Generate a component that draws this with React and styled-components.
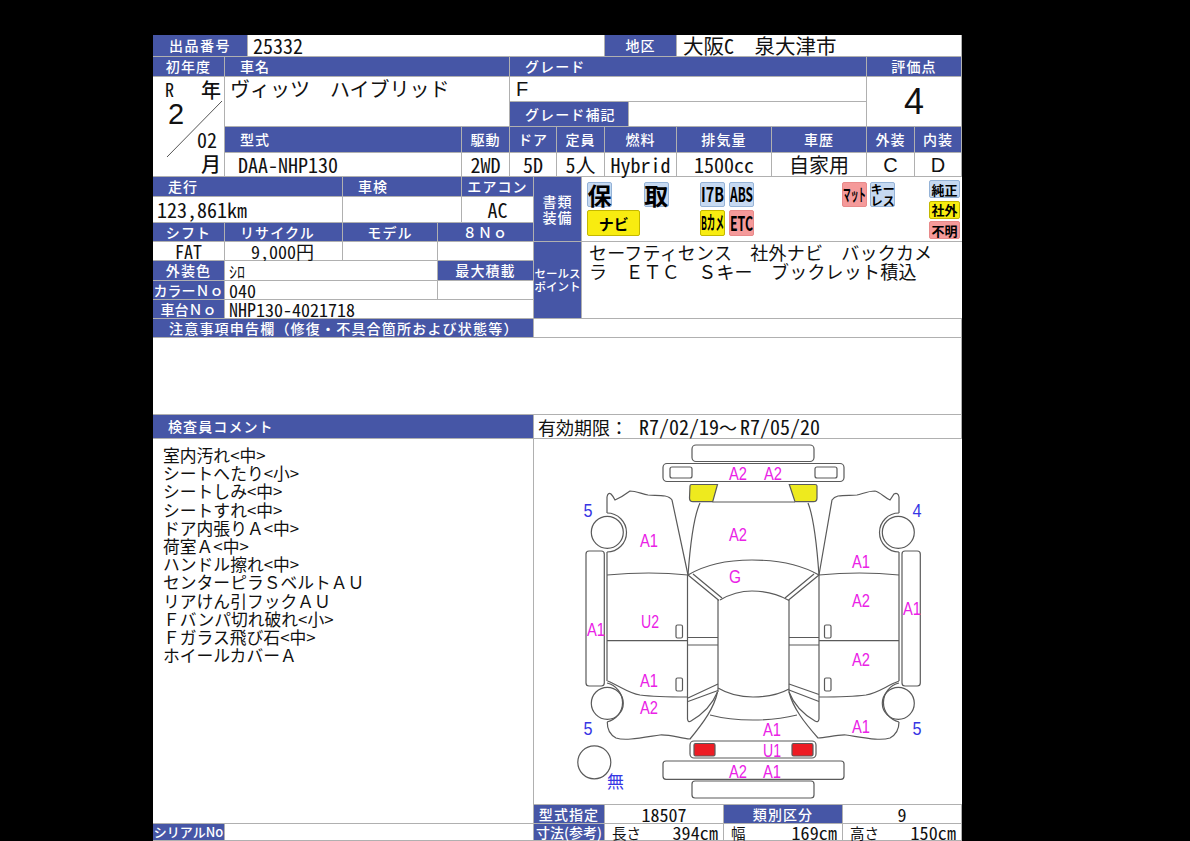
import React from "react";
import styled, { createGlobalStyle } from "styled-components";

const Global = createGlobalStyle`
  html, body { margin: 0; padding: 0; background: #000; height: 841px; overflow: hidden; }
  #root { height: 841px; }
`;

const BLUE = "#4656a6";
const LINE = "#b0b0b0";
const CJK = `"Noto Sans CJK JP", sans-serif`;
const SANS = `"Liberation Sans", sans-serif`;

const Sheet = styled.div`
  margin: 35px 0 0 153px;
  width: 809px;
  height: 806px;
  overflow: hidden;
  background: #fff;
  display: grid;
  font-family: ${CJK};
  grid-template-columns:
    [a] 72px [b] 23px [c] 95px [d] 95px [e] 24px [f] 48px [g] 24px [h] 23px [i] 25px
    [j] 23px [k] 24px [l] 48px [m] 47px [n] 48px [o] 71px [p] 24px [q] 48px [r] 47px [s];
  grid-template-rows:
    [r1] 22px [r2] 20px [r3] 25px [r4] 25px [r5] 26px [r6] 24px [r7] 20px [r8] 26px [r9] 19px
    [r10] 19px [r11] 20px [r12] 19px [r13] 19px [r14] 19px [r15] 77px [r16] 24px [r17] 366px
    [r18] 19px [r19] 17px [r20];
`;

const Head = styled.div`
  grid-column: ${(p) => p.$c};
  grid-row: ${(p) => p.$r};
  background: ${BLUE};
  color: #fff;
  font-size: ${(p) => p.$size || 14}px;
  font-weight: 500;
  letter-spacing: ${(p) => p.$space ?? 1.1}px;
  line-height: 1.15;
  display: flex;
  align-items: center;
  justify-content: ${(p) => (p.$left !== undefined ? "flex-start" : "center")};
  padding-left: ${(p) => p.$left || 0}px;
  text-align: center;
  white-space: nowrap;
  box-sizing: border-box;
  border-right: 1px solid ${LINE};
  border-bottom: 1px solid ${LINE};
`;

const Val = styled.div`
  grid-column: ${(p) => p.$c};
  grid-row: ${(p) => p.$r};
  background: #fff;
  color: #111;
  font-size: ${(p) => p.$size || 20}px;
  font-feature-settings: ${(p) => (p.$wide ? "normal" : '"hwid"')};
  display: flex;
  align-items: ${(p) => (p.$top ? "flex-start" : "center")};
  justify-content: ${(p) => (p.$left !== undefined ? "flex-start" : "center")};
  padding-left: ${(p) => p.$left || 0}px;
  padding-top: ${(p) => (p.$top ? 2 : 0)}px;
  line-height: 1;
  white-space: nowrap;
  box-sizing: border-box;
  border-right: 1px solid ${LINE};
  border-bottom: 1px solid ${LINE};
`;

const Latin = styled.span`
  font-family: ${SANS};
  font-size: ${(p) => p.$size || 20}px;
`;

const YearCell = styled.div`
  grid-column: a / b;
  grid-row: r3 / r7;
  position: relative;
  display: flex;
  flex-direction: column;
  box-sizing: border-box;
  padding: 0 3px 0 12px;
  border-right: 1px solid ${LINE};
  border-bottom: 1px solid ${LINE};
  color: #111;
  font-feature-settings: "hwid";
`;
const YearTop = styled.div`
  display: flex;
  justify-content: space-between;
  align-items: center;
  height: 24px;
  font-size: 18px;
`;
const YearKanji = styled.span`
  font-size: 20px;
  font-weight: 500;
`;
const YearBig = styled.div`
  font-family: ${SANS};
  font-size: 29px;
  line-height: 26px;
  height: 26px;
  padding-left: 3px;
`;
const YearEnd = styled.div`
  text-align: right;
  font-size: 20px;
  font-weight: ${(p) => (p.$kanji ? 500 : 400)};
  line-height: 25px;
  height: ${(p) => (p.$kanji ? 25 : 24)}px;
  padding-right: ${(p) => (p.$kanji ? 0 : 4)}px;
`;
const Slash = styled.svg`
  position: absolute;
  left: 0;
  top: 0;
`;

const EquipCell = styled.div`
  grid-column: j / s;
  grid-row: r7 / r10;
  display: flex;
  justify-content: space-between;
  padding: 5px 2px 0 5px;
  box-sizing: border-box;
  border-bottom: 1px solid ${LINE};
`;
const EquipGrid = styled.div`
  display: grid;
  grid-template-columns: repeat(11, 25px);
  grid-template-rows: 25px 26px;
  column-gap: 3.33px;
  row-gap: 3px;
`;
const TONES = {
  blue: ["#c6d9f1", "#95b3d7"],
  yellow: ["#f8ec10", "#c4b800"],
  pink: ["#f59a9a", "#e88a8a"],
};
const Chip = styled.div`
  grid-column: ${(p) => p.$c};
  grid-row: ${(p) => p.$r};
  background: ${(p) => TONES[p.$tone][0]};
  border: 1px solid ${(p) => TONES[p.$tone][1]};
  border-radius: 2px;
  box-sizing: border-box;
  color: #000;
  font-weight: 700;
  font-size: ${(p) => p.$size || 14}px;
  line-height: 1;
  display: flex;
  align-items: center;
  justify-content: center;
  text-align: center;
  white-space: nowrap;
`;
const ChipSvg = styled.svg`
  display: block;
  width: 23px;
  height: 23px;
`;
const Tight = ({ t, size = 20, w = 23 }) => (
  <ChipSvg viewBox="0 0 23 23">
    <text
      x="11.5"
      y={11.5 + size * 0.36}
      textAnchor="middle"
      fontSize={size}
      fontWeight="700"
      fontFamily='"Noto Sans CJK JP", sans-serif'
      fill="#000"
      textLength={w}
      lengthAdjust="spacingAndGlyphs"
    >
      {t}
    </text>
  </ChipSvg>
);
const SideCol = styled.div`
  display: flex;
  flex-direction: column;
  gap: 2.5px;
  width: 31px;
  margin-top: -2px;
`;
const SideChip = styled(Chip)`
  height: 18px;
  font-size: 13px;
`;

const SalesText = styled.div`
  grid-column: j / s;
  grid-row: r10 / r14;
  padding: 1px 24px 0 7px;
  box-sizing: border-box;
  font-size: 18px;
  letter-spacing: 0.2px;
  line-height: 19px;
  color: #111;
  word-break: break-all;
  border-bottom: 1px solid ${LINE};
`;

const Validity = styled(Val)`
  font-size: 18px;
  padding-left: 4px;
  justify-content: flex-start;
  font-feature-settings: normal;
`;
const HalfText = styled.span`
  font-size: 20px;
  font-feature-settings: "hwid";
  margin-left: ${(p) => p.$gap || 0}px;
`;

const Comments = styled.div`
  grid-column: a / h;
  grid-row: r17 / r19;
  box-sizing: border-box;
  padding: 7px 0 0 10px;
  border-right: 1px solid ${LINE};
  border-bottom: 1px solid ${LINE};
  font-size: 16.8px;
  line-height: 18.2px;
  color: #111;
`;
const CommentLine = styled.div`
  white-space: nowrap;
`;

const Diagram = styled.div`
  grid-column: h / s;
  grid-row: r17 / r18;
  border-bottom: 1px solid ${LINE};
  box-sizing: border-box;
  overflow: hidden;
`;
const DiagramSvg = styled.svg`
  display: block;
  width: 428px;
  height: 366px;
`;

const Measure = styled(Val)`
  justify-content: space-between;
  padding: 0 5px 0 7px;
  font-size: 18px;
  letter-spacing: 0.1px;
  align-items: flex-start;
  line-height: 17px;
`;
const MeasureKey = styled.span`
  font-size: 14.5px;
`;

const Empty = styled.div`
  grid-column: ${(p) => p.$c};
  grid-row: ${(p) => p.$r};
  box-sizing: border-box;
  border-right: 1px solid ${LINE};
  border-bottom: 1px solid ${LINE};
`;

const PINK = "#ea22e6";
const INK = "#5a5a5a";
const NAVY = "#3636e4";

const Mark = ({ x, y, t, color = PINK, w = 18, size = 19 }) => (
  <text
    x={x}
    y={y}
    textAnchor="middle"
    fontFamily='"Liberation Sans", sans-serif'
    fontSize={size}
    fill={color}
    textLength={w}
    lengthAdjust="spacingAndGlyphs"
  >
    {t}
  </text>
);

const marks = [
  [738, 480, "A2"], [773, 480, "A2"], [738, 541, "A2"], [649, 547, "A1"], [861, 568, "A1"],
  [735, 583, "G", 12], [861, 607, "A2"], [912, 615, "A1"], [596, 636, "A1"], [650, 628, "U2"],
  [861, 666, "A2"], [649, 687, "A1"], [649, 714, "A2"], [772, 736, "A1"], [861, 733, "A1"],
  [772, 757, "U1"], [738, 778, "A2"], [772, 778, "A1"],
];

const strokes = [
  "M607 513 L607 497 Q608 492 611 494 Q613 496 615 500 Q622 497 630 491 C636 491 642 494 648 495 C654 495.5 660 495 665 496 Q670 497 672 500 L688 575",
  "M607 513 A19.5 19.5 0 0 1 607 552",
  "M607 552 L607 681",
  "M607 575 Q650 571 688 575",
  "M899 513 L899 497 Q898 492 894 494 Q892 497 890 500 C885 498 880 492 875 491 C868 491 862 494 857 495 C850 495.5 844 495 838 496 Q834 497 832 500 L819 575",
  "M899 513 A19.5 19.5 0 0 0 899 552",
  "M899 552 L899 681",
  "M819 575 Q860 571 899 575",
  "M700 503 Q692 520 688 575",
  "M808 503 Q815 520 819 575",
  "M712.5 502 L795 502",
  "M688 575 C708 563 730 560 752 560 C775 560 798 563 819 575",
  "M720 600 C732 593 742 591 752 591 C764 591 776 593 788 600",
  "M688 575 L719 600.5 M693 574 L722 598",
  "M819 575 L788 600.5 M814 574 L785 598",
  "M687.5 575 L687.5 719 Q688 723 691 721 Q710 710 717.5 692",
  "M819 575 L819 719 Q818.5 723 815 721 Q796 710 789 692",
  "M718 600 L718 692",
  "M789 600 L789 692",
  "M688 637.5 H718 M688 645 H718 M789 637.5 H819 M789 645 H819",
  "M688 698 L718 684 M688 701.5 L718 690.5",
  "M789 684 L819 694.5 M789 690 L819 701.5",
  "M607 640.7 H688 M819 640.7 H899",
  "M607.5 681 C620 686 628 693 640 695 C655 697 672 697 688 697",
  "M899 681 C886 686 878 693 866 695 C851 697 836 697 819 697",
  "M607 683 A20 20 0 0 1 607 722",
  "M899 683 A20 20 0 0 0 899 722",
  "M607.3 722 Q607 733 616 738 C625 741 640 738 660 735 C670 734.5 680 738 690 739 C704 722 714 708 717.5 692",
  "M899 722 Q899 733 890 738 C880 741 866 738 846 735 C836 734.5 826 738 818 738 C804 722 793 708 789 692",
  "M718 688 C728 694 740 697 753 697 C768 697 780 694 789 689",
  "M710 715 C725 719 740 720 753 720 C770 720 785 718 797 715",
];

const App = () => (
  <>
    <Global />
    <Sheet>
      <Head $c="a / c" $r="r1 / r2" $space={1.5}>出品番号</Head>
      <Val $c="c / k" $r="r1 / r2" $left={5}>25332</Val>
      <Head $c="k / m" $r="r1 / r2">地区</Head>
      <Val $c="m / s" $r="r1 / r2" $left={6} $size={20.5} $wide>大阪<HalfText>C</HalfText>　泉大津市</Val>

      <Head $c="a / b" $r="r2 / r3">初年度</Head>
      <Head $c="b / g" $r="r2 / r3" $left={15}>車名</Head>
      <Head $c="g / q" $r="r2 / r3" $left={15}>グレード</Head>
      <Head $c="q / s" $r="r2 / r3">評価点</Head>

      <YearCell>
        <YearTop><span>R</span><YearKanji>年</YearKanji></YearTop>
        <YearBig>2</YearBig>
        <YearEnd>02</YearEnd>
        <YearEnd $kanji>月</YearEnd>
        <Slash width="72" height="100" viewBox="0 0 72 100">
          <path d="M69 24 L14 80" stroke="#555" strokeWidth="1" fill="none" />
        </Slash>
      </YearCell>

      <Val $c="b / g" $r="r3 / r5" $left={5} $top $wide>ヴィッツ　ハイブリッド</Val>
      <Val $c="g / q" $r="r3 / r4" $left={6}><Latin>F</Latin></Val>
      <Head $c="g / l" $r="r4 / r5" $left={15}>グレード補記</Head>
      <Empty $c="l / q" $r="r4 / r5" />
      <Val $c="q / s" $r="r3 / r5"><Latin $size={36}>4</Latin></Val>

      <Head $c="b / f" $r="r5 / r6" $left={15}>型式</Head>
      <Head $c="f / g" $r="r5 / r6">駆動</Head>
      <Head $c="g / i" $r="r5 / r6">ドア</Head>
      <Head $c="i / k" $r="r5 / r6">定員</Head>
      <Head $c="k / m" $r="r5 / r6">燃料</Head>
      <Head $c="m / o" $r="r5 / r6">排気量</Head>
      <Head $c="o / q" $r="r5 / r6">車歴</Head>
      <Head $c="q / r" $r="r5 / r6">外装</Head>
      <Head $c="r / s" $r="r5 / r6">内装</Head>

      <Val $c="b / f" $r="r6 / r7" $left={13}>DAA-NHP130</Val>
      <Val $c="f / g" $r="r6 / r7">2WD</Val>
      <Val $c="g / i" $r="r6 / r7">5D</Val>
      <Val $c="i / k" $r="r6 / r7">5人</Val>
      <Val $c="k / m" $r="r6 / r7">Hybrid</Val>
      <Val $c="m / o" $r="r6 / r7">1500cc</Val>
      <Val $c="o / q" $r="r6 / r7">自家用</Val>
      <Val $c="q / r" $r="r6 / r7"><Latin>C</Latin></Val>
      <Val $c="r / s" $r="r6 / r7"><Latin>D</Latin></Val>

      <Head $c="a / d" $r="r7 / r8" $left={15}>走行</Head>
      <Head $c="d / f" $r="r7 / r8" $left={15}>車検</Head>
      <Head $c="f / h" $r="r7 / r8">エアコン</Head>
      <Head $c="h / j" $r="r7 / r10">書類<br />装備</Head>

      <EquipCell>
        <EquipGrid>
          <Chip $c="1" $r="1" $tone="blue" $size={24}>保</Chip>
          <Chip $c="3" $r="1" $tone="blue" $size={24}>取</Chip>
          <Chip $c="5" $r="1" $tone="blue"><Tight t="I7B" /></Chip>
          <Chip $c="6" $r="1" $tone="blue"><Tight t="ABS" /></Chip>
          <Chip $c="10" $r="1" $tone="pink"><Tight t="マット" size={17} /></Chip>
          <Chip $c="11" $r="1" $tone="blue" $size={12}>キー<br />レス</Chip>
          <Chip $c="1 / 3" $r="2" $tone="yellow" $size={15}>ナビ</Chip>
          <Chip $c="5" $r="2" $tone="yellow"><Tight t="Bカメ" size={19} /></Chip>
          <Chip $c="6" $r="2" $tone="pink"><Tight t="ETC" /></Chip>
        </EquipGrid>
        <SideCol>
          <SideChip $tone="blue">純正</SideChip>
          <SideChip $tone="yellow">社外</SideChip>
          <SideChip $tone="pink">不明</SideChip>
        </SideCol>
      </EquipCell>

      <Val $c="a / d" $r="r8 / r9" $left={4}>123,861km</Val>
      <Val $c="d / f" $r="r8 / r9" />
      <Val $c="f / h" $r="r8 / r9">AC</Val>

      <Head $c="a / b" $r="r9 / r10">シフト</Head>
      <Head $c="b / d" $r="r9 / r10" $left={15}>リサイクル</Head>
      <Head $c="d / e" $r="r9 / r10">モデル</Head>
      <Head $c="e / h" $r="r9 / r10">８Ｎｏ</Head>

      <Head $c="h / j" $r="r10 / r14" $size={11.5} $space={0}>セールス<br />ポイント</Head>
      <SalesText>セーフティセンス　社外ナビ　バックカメラ　ＥＴＣ　Ｓキー　ブックレット積込</SalesText>

      <Val $c="a / b" $r="r10 / r11" $size={18}>FAT</Val>
      <Val $c="b / d" $r="r10 / r11" $left={26} $size={18}>9,000円</Val>
      <Val $c="d / e" $r="r10 / r11" />
      <Val $c="e / h" $r="r10 / r11" />

      <Head $c="a / b" $r="r11 / r12">外装色</Head>
      <Val $c="b / e" $r="r11 / r12" $left={4} $size={16}>ｼﾛ</Val>
      <Head $c="e / h" $r="r11 / r12">最大積載</Head>

      <Head $c="a / b" $r="r12 / r13" $space={0}>カラーＮｏ</Head>
      <Val $c="b / e" $r="r12 / r13" $left={4} $size={18}>040</Val>
      <Val $c="e / h" $r="r12 / r13" />

      <Head $c="a / b" $r="r13 / r14" $space={0}>車台Ｎｏ</Head>
      <Val $c="b / h" $r="r13 / r14" $left={4} $size={18}>NHP130-4021718</Val>

      <Head $c="a / h" $r="r14 / r15" $left={16} $space={1.2}>注意事項申告欄（修復・不具合箇所および状態等）</Head>
      <Empty $c="h / s" $r="r14 / r15" />
      <Empty $c="a / s" $r="r15 / r16" />

      <Head $c="a / h" $r="r16 / r17" $left={15}>検査員コメント</Head>
      <Validity $c="h / s" $r="r16 / r17">有効期限：<HalfText $gap={11}>R7/02/19</HalfText>～<HalfText $gap={3}>R7/05/20</HalfText></Validity>

      <Comments>
        {[
          "室内汚れ<中>", "シートへたり<小>", "シートしみ<中>", "シートすれ<中>", "ドア内張りＡ<中>", "荷室Ａ<中>",
          "ハンドル擦れ<中>", "センターピラＳベルトＡＵ", "リアけん引フックＡＵ", "Ｆバンパ切れ破れ<小>",
          "Ｆガラス飛び石<中>", "ホイールカバーＡ",
        ].map((t) => <CommentLine key={t}>{t}</CommentLine>)}
      </Comments>

      <Diagram>
        <DiagramSvg viewBox="534 439 428 366">
          <g fill="none" stroke={INK} strokeWidth="1.2">
            <rect x="692" y="445" width="122" height="16.5" rx="4" />
            <rect x="663" y="463.5" width="181" height="18" rx="4" />
            <rect x="670" y="467" width="22" height="11" rx="2" />
            <rect x="815" y="467" width="22" height="11" rx="2" />
            <path d="M690 486 Q690 484.5 691.5 484.5 H717.5 L712.7 501.7 H693 Q689.5 501.7 689.5 498 Z" fill="#eeea1e" />
            <path d="M789.3 484.5 H815 Q817 484.5 817 486 V498 Q817 501.7 813.5 501.7 H795 Z" fill="#eeea1e" />

            {strokes.map((d) => <path key={d} d={d} />)}

            <circle cx="607.3" cy="532.3" r="16" />
            <circle cx="898.3" cy="532.3" r="16" />
            <circle cx="607.3" cy="703.3" r="16" />
            <circle cx="898.3" cy="703.3" r="16" />
            <circle cx="594.3" cy="762.3" r="16.5" />

            <rect x="586" y="551" width="18.3" height="135" rx="3" />
            <rect x="902" y="551" width="18.3" height="135" rx="3" />
            <rect x="676" y="625" width="6.5" height="13" rx="1.5" />
            <rect x="676" y="678" width="6.5" height="13" rx="1.5" />
            <rect x="824.5" y="625" width="6.5" height="13" rx="1.5" />
            <rect x="824.5" y="678" width="6.5" height="13" rx="1.5" />

            <rect x="690" y="741" width="126" height="17" rx="4" />
            <rect x="694" y="743.5" width="21" height="12.5" rx="1.5" fill="#ed1c24" />
            <rect x="792" y="743.5" width="21" height="12.5" rx="1.5" fill="#ed1c24" />
            <rect x="663" y="761" width="181" height="18.3" rx="3" />
            <rect x="692" y="781" width="122" height="17" rx="3" />
          </g>
          {marks.map(([x, y, t, w]) => <Mark key={`${x}-${y}`} x={x} y={y} t={t} w={w || 18} />)}
          <Mark x={588} y={517} t="5" color={NAVY} w={9} />
          <Mark x={917} y={517} t="4" color={NAVY} w={9} />
          <Mark x={588} y={735} t="5" color={NAVY} w={9} />
          <Mark x={917} y={735} t="5" color={NAVY} w={9} />
          <text x="607" y="788" fontFamily='"Noto Sans CJK JP", sans-serif' fontSize="17" fill={NAVY}>無</text>
        </DiagramSvg>
      </Diagram>

      <Head $c="h / k" $r="r18 / r19">型式指定</Head>
      <Val $c="k / n" $r="r18 / r19" $size={18}>18507</Val>
      <Head $c="n / p" $r="r18 / r19">類別区分</Head>
      <Val $c="p / s" $r="r18 / r19" $size={18}>9</Val>

      <Head $c="a / b" $r="r19 / r20" $size={13} $space={0}>シリアルNo</Head>
      <Empty $c="b / h" $r="r19 / r20" />
      <Head $c="h / k" $r="r19 / r20" $space={0}>寸法(参考)</Head>
      <Measure $c="k / n" $r="r19 / r20"><MeasureKey>長さ</MeasureKey><span>394cm</span></Measure>
      <Measure $c="n / p" $r="r19 / r20"><MeasureKey>幅</MeasureKey><span>169cm</span></Measure>
      <Measure $c="p / s" $r="r19 / r20"><MeasureKey>高さ</MeasureKey><span>150cm</span></Measure>
    </Sheet>
  </>
);

export default App;
